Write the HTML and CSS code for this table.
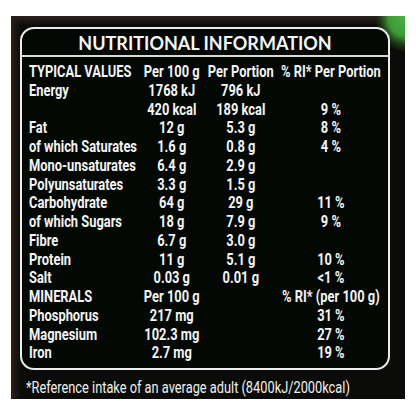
FILE: index.html
```html
<!DOCTYPE html>
<html lang="en">
<head>
  <meta charset="UTF-8">
  <meta name="viewport" content="width=device-width, initial-scale=1.0">
  <title>Nutritional Information</title>
  <link rel="stylesheet" href="styles.css">
</head>
<body>
  <div class="panel">
    <div class="label-box">
      <h1 class="title">NUTRITIONAL INFORMATION</h1>

      <!-- Nutrition rows -->
      <div class="grid">
        <div class="cell name">TYPICAL VALUES</div>
        <div class="cell">Per 100 g</div>
        <div class="cell">Per Portion</div>
        <div class="cell">% RI* Per Portion</div>

        <div class="cell name">Energy</div>
        <div class="cell">1768 kJ</div>
        <div class="cell">796 kJ</div>
        <div class="cell"></div>

        <div class="cell name"></div>
        <div class="cell">420 kcal</div>
        <div class="cell">189 kcal</div>
        <div class="cell">9 %</div>

        <div class="cell name">Fat</div>
        <div class="cell">12 g</div>
        <div class="cell">5.3 g</div>
        <div class="cell">8 %</div>

        <div class="cell name">of which Saturates</div>
        <div class="cell">1.6 g</div>
        <div class="cell">0.8 g</div>
        <div class="cell">4 %</div>

        <div class="cell name">Mono-unsaturates</div>
        <div class="cell">6.4 g</div>
        <div class="cell">2.9 g</div>
        <div class="cell"></div>

        <div class="cell name">Polyunsaturates</div>
        <div class="cell">3.3 g</div>
        <div class="cell">1.5 g</div>
        <div class="cell"></div>

        <div class="cell name">Carbohydrate</div>
        <div class="cell">64 g</div>
        <div class="cell">29 g</div>
        <div class="cell">11 %</div>

        <div class="cell name">of which Sugars</div>
        <div class="cell">18 g</div>
        <div class="cell">7.9 g</div>
        <div class="cell">9 %</div>

        <div class="cell name">Fibre</div>
        <div class="cell">6.7 g</div>
        <div class="cell">3.0 g</div>
        <div class="cell"></div>

        <div class="cell name">Protein</div>
        <div class="cell">11 g</div>
        <div class="cell">5.1 g</div>
        <div class="cell">10 %</div>

        <div class="cell name">Salt</div>
        <div class="cell">0.03 g</div>
        <div class="cell">0.01 g</div>
        <div class="cell">&lt;1 %</div>

        <div class="cell name">MINERALS</div>
        <div class="cell">Per 100 g</div>
        <div class="cell"></div>
        <div class="cell">% RI* (per 100 g)</div>

        <div class="cell name">Phosphorus</div>
        <div class="cell">217 mg</div>
        <div class="cell"></div>
        <div class="cell">31 %</div>

        <div class="cell name">Magnesium</div>
        <div class="cell">102.3 mg</div>
        <div class="cell"></div>
        <div class="cell">27 %</div>

        <div class="cell name">Iron</div>
        <div class="cell">2.7 mg</div>
        <div class="cell"></div>
        <div class="cell">19 %</div>
      </div>
    </div>

    <p class="footnote">*Reference intake of an average adult (8400kJ/2000kcal)</p>
  </div>
</body>
</html>
```

FILE: styles.css
```css
/* General Styles */
body {
  margin: 0;
  background-color: #ffffff;
  font-family: Roboto, "Liberation Sans", sans-serif;
  color: #f4f4f4;
}

.panel {
  width: 394px;
  height: 383px;
  margin: 16px 0 0 11px;
  padding: 11px 15px 0 9px;
  box-sizing: border-box;
  overflow: hidden;
  background-color: #0b0c0a;
  background-image:
    radial-gradient(ellipse 30px 36px at 100% 0%, #4cb445 0, #3e9a36 55%, rgba(34, 80, 28, 0.7) 80%, rgba(0, 0, 0, 0) 100%),
    linear-gradient(90deg, #2a1e19 0, rgba(30, 22, 18, 0) 10px),
    linear-gradient(180deg, #2b1f1a 0, rgba(30, 22, 18, 0) 10px);
}

.label-box {
  border: 2px solid #ececec;
  border-radius: 14px;
  background-color: #030804;
  height: 343px;
  box-sizing: border-box;
}

.title {
  margin: 0;
  height: 26px;
  line-height: 28px;
  text-align: center;
  font-family: Lato, "Liberation Sans", sans-serif;
  font-weight: 700;
  font-size: 18px;
  color: #f6f6f6;
  border-bottom: 2px solid #d8d8d8;
}

/* Condensed look: the grid is squeezed horizontally, columns widened to match */
.grid {
  display: grid;
  grid-template-columns: 138px 90px 87px 144px;
  padding: 6px 0 0 9px;
  font-weight: 700;
  font-size: 16.5px;
  line-height: 18.75px;
  transform: scaleX(0.78);
  transform-origin: left top;
}

.cell {
  text-align: center;
  white-space: nowrap;
}

.cell.name {
  text-align: left;
}

.footnote {
  margin: 9px 0 0 6px;
  font-size: 16px;
  line-height: 18px;
  white-space: nowrap;
  color: #f0f0f0;
  transform: scaleX(0.8);
  transform-origin: left top;
}
```
